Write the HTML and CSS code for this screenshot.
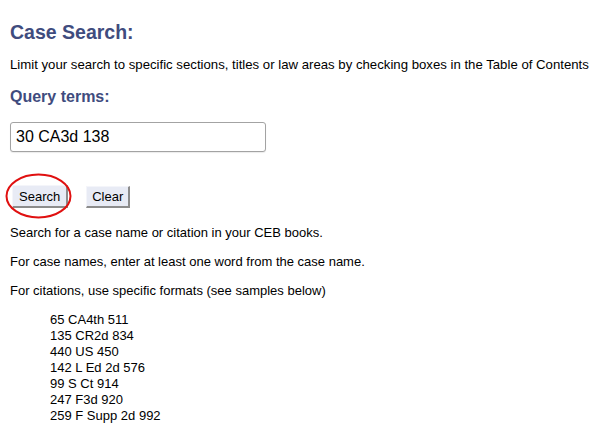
FILE: index.html
```html
<!DOCTYPE html>
<html lang="en">
<head>
    <meta charset="UTF-8">
    <title>Case Search</title>
    <link rel="stylesheet" href="styles.css">
</head>
<body>
    <h1>Case Search:</h1>
    <p class="intro">Limit your search to specific sections, titles or law areas by checking boxes in the Table of Contents</p>
    <h2>Query terms:</h2>
    <input class="query" type="text" value="30 CA3d 138">
    <div class="buttons">
        <span class="search-wrap">
            <button class="btn">Search</button>
            <svg class="circle" width="67" height="46" viewBox="0 0 67 46">
                <ellipse cx="33.5" cy="23" rx="32" ry="21.5" fill="none" stroke="#e01010" stroke-width="2"/>
            </svg>
        </span>
        <button class="btn clear">Clear</button>
    </div>
    <p class="help">Search for a case name or citation in your CEB books.</p>
    <p class="help">For case names, enter at least one word from the case name.</p>
    <p class="help">For citations, use specific formats (see samples below)</p>
    <ul class="samples">
        <li>65 CA4th 511</li>
        <li>135 CR2d 834</li>
        <li>440 US 450</li>
        <li>142 L Ed 2d 576</li>
        <li>99 S Ct 914</li>
        <li>247 F3d 920</li>
        <li>259 F Supp 2d 992</li>
    </ul>
</body>
</html>
```

FILE: styles.css
```css
body {
    font-family: "Liberation Sans", Arial, sans-serif;
    font-size: 13px;
    color: #000;
    background-color: #fff;
    margin: 0;
    padding: 0 10px;
}
h1 {
    font-size: 19.5px;
    line-height: 22px;
    color: #3f4c7e;
    margin: 21px 0 0 0;
}
h2 {
    font-size: 16px;
    line-height: 20px;
    color: #3f4c7e;
    margin: 14px 0 0 0;
}
.intro {
    font-size: 13.2px;
    line-height: 16px;
    margin: 14px 0 0 0;
    white-space: nowrap;
}
.query {
    display: block;
    box-sizing: border-box;
    width: 256px;
    height: 30px;
    margin: 15px 0 0 0;
    padding: 0 5px;
    font-family: "Liberation Sans", Arial, sans-serif;
    font-size: 16px;
    color: #000;
    border: 1px solid #a3a3a3;
    border-radius: 3px;
    box-shadow: 0 1px 1px rgba(0,0,0,0.08);
}
.buttons {
    display: flex;
    align-items: flex-start;
    margin-top: 33px;
    padding-left: 2px;
}
.search-wrap {
    position: relative;
    display: inline-block;
}
.circle {
    position: absolute;
    left: -7px;
    top: -12px;
}
.btn {
    box-sizing: border-box;
    height: 23px;
    padding: 0 6px;
    font-family: "Liberation Sans", Arial, sans-serif;
    font-size: 13px;
    color: #000;
    background-color: #e8ebf5;
    border-style: solid;
    border-width: 1px 2px 2px 1px;
    border-color: #f4f5fa #8c8c8c #8c8c8c #f4f5fa;
    border-radius: 0;
}
.clear {
    margin-left: 18px;
    margin-top: 1px;
    height: 22px;
    padding: 0 5px;
}
.help {
    line-height: 16px;
    margin: 13px 0 0 0;
}
.buttons + .help {
    margin-top: 17px;
}
.samples {
    list-style: none;
    margin: 13px 0 0 0;
    padding: 0 0 0 40px;
}
.samples li {
    line-height: 16px;
}
```
